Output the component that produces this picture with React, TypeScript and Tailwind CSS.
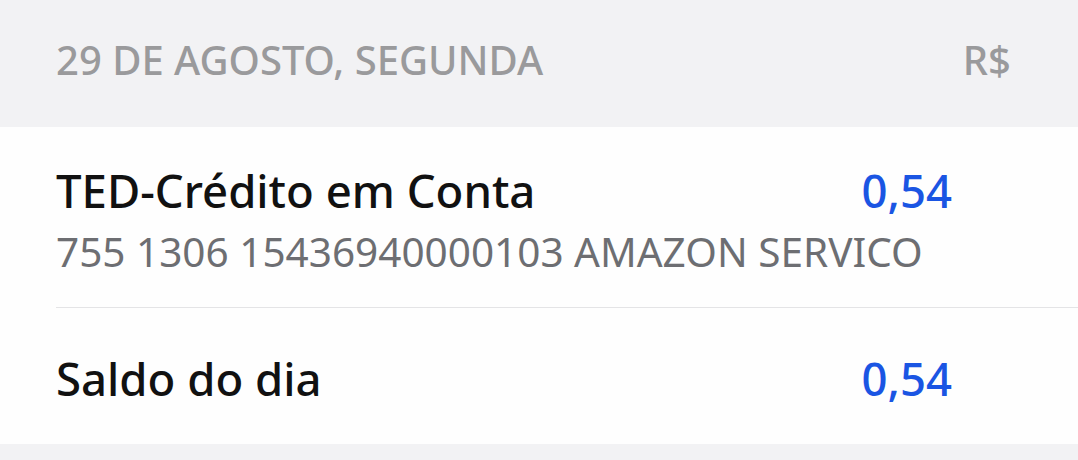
export default function App() {
  const font = { fontFamily: '"Noto Sans", "Open Sans", sans-serif' };
  return (
    <div className="w-[1078px] h-[460px] bg-[#f2f2f4] flex flex-col" style={font}>
      <div className="h-[127px] flex items-center justify-between pl-[56px] pr-[67px] pb-[8px] shrink-0">
        <span className="text-[40px] font-medium text-[#9a9a9c] leading-[40px]">29 DE AGOSTO, SEGUNDA</span>
        <span className="text-[40px] font-medium text-[#9a9a9c] leading-[40px]">R$</span>
      </div>
      <div className="bg-[#fefefe] flex flex-col">
        <div className="h-[180px] flex flex-col pt-[35px] pl-[56px]">
          <div className="flex items-baseline justify-between pr-[126px]">
            <span className="text-[45.5px] font-medium text-[#111111] leading-[56px]">TED-Crédito em Conta</span>
            <span className="text-[45.5px] font-medium text-[#1a55e3] leading-[56px]">0,54</span>
          </div>
          <span className="mt-[6px] text-[40.5px] text-[#6d6e72] leading-[56px]">755 1306 15436940000103 AMAZON SERVICO</span>
        </div>
        <div className="ml-[56px] h-px bg-[#e4e4e6]" />
        <div className="h-[136px] flex items-center justify-between pt-[4px] pl-[56px] pr-[126px]">
          <span className="text-[45.5px] font-medium text-[#111111] leading-[56px]">Saldo do dia</span>
          <span className="text-[45.5px] font-medium text-[#1a55e3] leading-[56px]">0,54</span>
        </div>
      </div>
    </div>
  );
}
